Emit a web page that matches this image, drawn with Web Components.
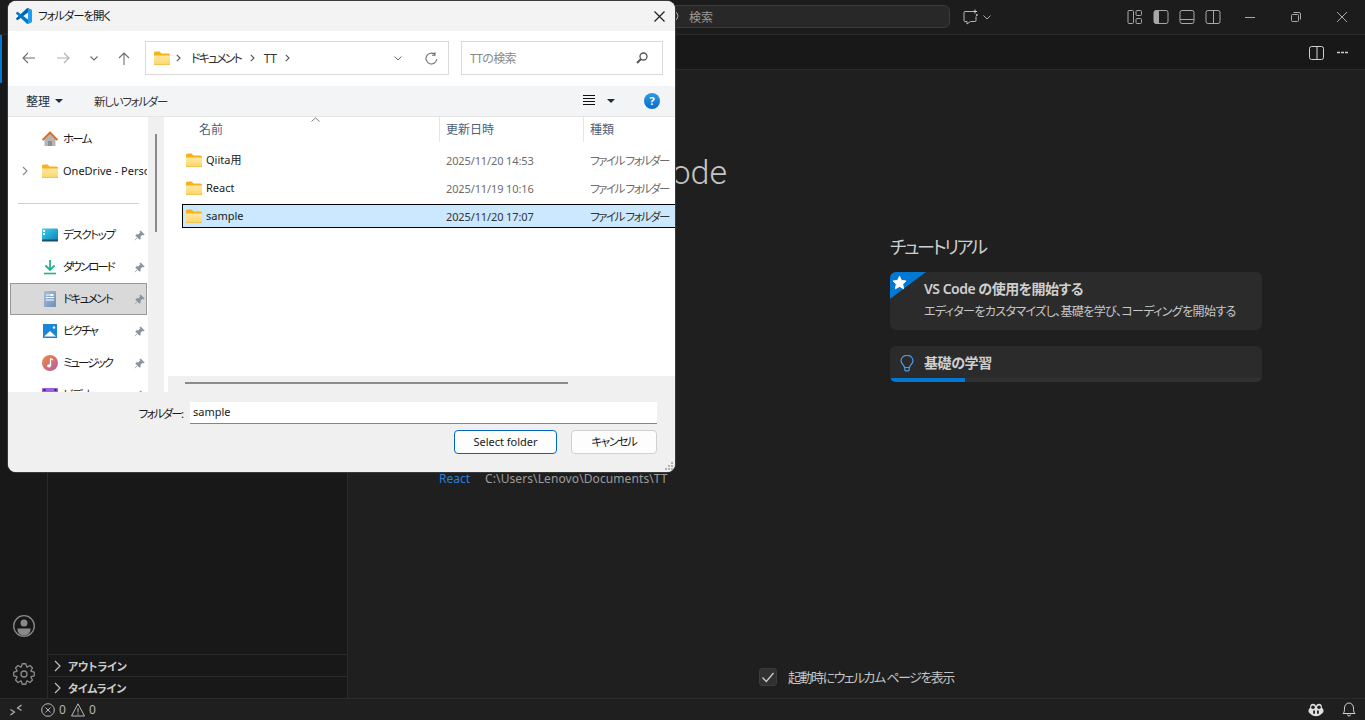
<!DOCTYPE html>
<html lang="ja"><head><meta charset="utf-8"><title>VS Code</title>
<style>
html,body{margin:0;padding:0;width:1365px;height:720px;overflow:hidden;background:#1f1f1f}
body{font-family:"Noto Sans","Noto Sans CJK JP",sans-serif;font-size:12px;font-feature-settings:"palt";color:#ccc}
</style></head><body>
<vs-app></vs-app>
<script>
function def(tag,css,html){customElements.define(tag,class extends HTMLElement{connectedCallback(){if(this.shadowRoot)return;const r=this.attachShadow({mode:'open'});r.innerHTML='<style>'+css+'</style>'+(typeof html==='function'?html(this):html);}});}
const s=(w,h,vb,b,x='')=>`<svg width="${w}" height="${h}" viewBox="${vb}" fill="none" ${x} style="display:block;flex:none">${b}</svg>`;
const st='stroke="#a8a8a8" stroke-width="1"';
function gearPath(){let d='';const n=8,cx=12,cy=12;for(let i=0;i<n;i++){const a=i*2*Math.PI/n;const p=(r,o)=>{const t=a+o;return (cx+r*Math.cos(t)).toFixed(2)+' '+(cy+r*Math.sin(t)).toFixed(2)};d+=(i?'L':'M')+p(7.6,-.36)+'L'+p(10.4,-.17)+'L'+p(10.4,.17)+'L'+p(7.6,.36);}return d+'Z';}
const folder=(w=16,h=14)=>s(w,h,'0 0 16 14',`<defs><linearGradient id="fg" x1="0" y1="0" x2="0" y2="1"><stop offset="0" stop-color="#ffe9a0"/><stop offset="1" stop-color="#fcd56a"/></linearGradient></defs><path d="M0 2a1.500 1.500 0 0 1 1.500-1.500h4L7.500 2.500h7A1.500 1.500 0 0 1 16 4v1H0z" fill="#f5b21b"/><path d="M0 4.500h16v8A1.500 1.500 0 0 1 14.500 14h-13A1.500 1.500 0 0 1 0 12.500z" fill="url(#fg)"/><path d="M0 12.500A1.500 1.500 0 0 0 1.500 14h13a1.500 1.500 0 0 0 1.500-1.500" stroke="#e9a92a" stroke-width=".8"/>`);
const icons={
home:s(16,16,'0 0 16 16',`<path d="M8 2 15.500 9H13.500V15H2.500V9H.5z" fill="#b5b5b5"/><path d="M.6 9 8 1.600 15.400 9" stroke="#dc6a1c" stroke-width="1.800"/><rect x="6" y="10" width="4" height="5" fill="#8e8e8e"/>`),
folder:folder(),
desktop:s(16,16,'0 0 16 16',`<defs><linearGradient id="dk" x1="0" y1="0" x2="1" y2="1"><stop offset="0" stop-color="#3fd0ef"/><stop offset="1" stop-color="#0b83b8"/></linearGradient></defs><rect y="1.500" width="16" height="12" rx="1" fill="url(#dk)"/><rect x="1" y="3" width="2" height="2" fill="#fff"/><rect x="1" y="6" width="2" height="2" fill="#fff"/><rect y="12.500" width="16" height="2" fill="#17506e"/>`),
download:s(16,16,'0 0 16 16',`<path d="M8 1v9M3.500 6.500 8 11l4.500-4.500" stroke="#25b08f" stroke-width="1.800"/><path d="M2 14.500h12" stroke="#25b08f" stroke-width="1.600"/>`),
doc:s(16,16,'0 0 16 16',`<defs><linearGradient id="dc" x1="0" y1="0" x2="1" y2="1"><stop offset="0" stop-color="#a9c0dc"/><stop offset="1" stop-color="#6d8db5"/></linearGradient></defs><rect x="2" width="12" height="16" rx="1" fill="url(#dc)"/><path d="M4 4h6M4 6.500h8M4 9h8" stroke="#fff" stroke-width="1.100"/><rect x="8.500" y="3" width="3" height="2" fill="#fff"/>`),
picture:s(16,16,'0 0 16 16',`<rect width="14" height="14" x="1" y="1" fill="#1a86d9"/><path d="M2 13.500 8 8l6 5.500z" fill="#fff"/><circle cx="12" cy="4.500" r="1.200" fill="#fff"/>`),
music:s(16,16,'0 0 16 16',`<defs><linearGradient id="mu" x1="0" y1="0" x2="1" y2="1"><stop offset="0" stop-color="#f08a3c"/><stop offset="1" stop-color="#b45ca8"/></linearGradient></defs><circle cx="8" cy="8" r="8" fill="url(#mu)"/><path d="M8.500 3.500v7" stroke="#fff" stroke-width="1.300"/><ellipse cx="7" cy="10.800" rx="2" ry="1.600" fill="#fff"/><path d="M8.500 3.500 11 5" stroke="#fff" stroke-width="1.300"/>`),
video:s(16,16,'0 0 16 16',`<rect y="1" width="16" height="14" rx="1" fill="#9a62e0"/><rect x="1.500" y="2" width="2" height="2" fill="#3a2070"/><rect x="12.500" y="2" width="2" height="2" fill="#3a2070"/>`)};
const pin=s(11,11,'0 0 11 11',`<path d="M6.500.8 10.200 4.500 9.200 5 8.200 4.700 6.200 6.700 6.300 8.700 5.300 9.200 1.800 5.700 2.300 4.700 4.300 4.800 6.300 2.800 6 1.800zM3 8 .8 10.200" fill="#8b939b" stroke="#8b939b" stroke-width=".7"/>`);

def('vs-app',`:host{display:grid;width:1365px;height:720px;grid-template:35px 1fr 22px/48px 300px 1fr;position:relative;overflow:hidden}
vs-titlebar{grid-column:1/4}vs-statusbar{grid-column:1/4}`,
`<vs-titlebar></vs-titlebar><vs-activity></vs-activity><vs-sidebar></vs-sidebar><vs-editor></vs-editor><vs-statusbar></vs-statusbar><file-dialog></file-dialog>`);

def('vs-titlebar',`:host{display:flex;align-items:center;background:#1c1c1c;border-bottom:1px solid #2b2b2b;box-sizing:border-box;height:35px}
.search{margin-left:414px;width:536px;height:23px;box-sizing:border-box;margin-top:-1px;border:1px solid #3c3c3c;border-radius:6px;background:#282828;display:flex;align-items:center;justify-content:flex-start;padding-left:253px;gap:7px;color:#9a9a9a;font-size:12px}
.chat{margin-left:13px;display:flex;align-items:center;gap:4px}
.r{margin-left:auto;display:flex;align-items:center}.b{width:26px;display:flex;justify-content:center}.w{width:46px;display:flex;justify-content:center}`,
`<div class="search">${s(14,14,'0 0 14 14',`<circle cx="6" cy="6" r="4" ${st}/><path d="M3 9 1 12" ${st}/>`)}<span>検索</span></div>
<div class="chat">${s(16,16,'0 0 16 16',`<path d="M10 2.500H2A1 1 0 0 0 1 3.500v8a1 1 0 0 0 1 1h2v2.500l3.500-2.500H12a1 1 0 0 0 1-1V7.500" stroke="#b5b5b5"/><path d="M12 .5v4M10 2.500h4" stroke="#d0d0d0"/><circle cx="13.800" cy="6" r="1" fill="#c0c0c0"/>`)}${s(8,5,'0 0 8 5',`<path d="M.5.5 4 4 7.500.5" ${st}/>`)}</div>
<div class="r">
<div class="b">${s(16,16,'0 0 16 16',`<rect x="1" y="1.500" width="5.500" height="13" rx="1" ${st}/><rect x="9" y="1.500" width="5.500" height="5" rx="1" ${st}/><rect x="9" y="9.500" width="5.500" height="5" rx="1" ${st}/>`)}</div>
<div class="b">${s(16,16,'0 0 16 16',`<rect x="1" y="1.500" width="14" height="13" rx="2" ${st}/><path d="M3 1.500h3v13H3a2 2 0 0 1-2-2v-9a2 2 0 0 1 2-2z" fill="#a8a8a8"/>`)}</div>
<div class="b">${s(16,16,'0 0 16 16',`<rect x="1" y="1.500" width="14" height="13" rx="2" ${st}/><path d="M1 10.500h14" ${st}/>`)}</div>
<div class="b">${s(16,16,'0 0 16 16',`<rect x="1" y="1.500" width="14" height="13" rx="2" ${st}/><path d="M8.500 1.500v13" ${st}/>`)}</div>
<div style="width:1px"></div>
<div class="w">${s(10,10,'0 0 10 10',`<path d="M0 5.500h10" ${st}/>`)}</div>
<div class="w">${s(10,10,'0 0 10 10',`<rect x=".5" y="2.500" width="7" height="7" rx="1" ${st}/><path d="M2.500 .5H8A1.500 1.500 0 0 1 9.500 2v5.500" ${st}/>`)}</div>
<div class="w">${s(10,10,'0 0 10 10',`<path d="M0 0 10 10M10 0 0 10" ${st}/>`)}</div>
</div>`);

def('vs-activity',`:host{display:flex;flex-direction:column;align-items:center;justify-content:flex-end;background:#181818;border-right:1px solid #2b2b2b;box-sizing:border-box;padding-bottom:12px;gap:24px;position:relative}
.ind{position:absolute;left:0;top:0;width:2px;height:48px;background:#0078d4}`,
`<div class="ind"></div>
${s(24,24,'0 0 24 24',`<circle cx="12" cy="12" r="10.300" stroke="#8a8a8a" stroke-width="1.300"/><circle cx="12" cy="9" r="3.500" fill="#8a8a8a"/><path d="M5.500 14.500h13v1a6.500 6 0 0 1-13 0z" fill="#8a8a8a"/>`)}
${s(24,24,'0 0 24 24',`<path d="${gearPath()}" stroke="#8a8a8a" stroke-width="1.300" stroke-linejoin="round"/><circle cx="12" cy="12" r="3" stroke="#8a8a8a" stroke-width="1.300"/>`)}`);

def('vs-sidebar',`:host{display:flex;flex-direction:column;justify-content:flex-end;background:#181818;border-right:1px solid #2b2b2b;box-sizing:border-box}
.h{height:22px;box-sizing:border-box;border-top:1px solid #2b2b2b;display:flex;align-items:center;gap:6px;padding-left:6px;font-size:11px;font-weight:700;color:#ccc;letter-spacing:-.2px}`,
[`アウトライン`,`タイムライン`].map(t=>`<div class="h">${s(8,12,'0 0 8 12',`<path d="M1 1l5 5-5 5" stroke="#c0c0c0" stroke-width="1.200"/>`)}<span>${t}</span></div>`).join(''));

def('vs-editor',`:host{display:flex;flex-direction:column;min-width:0}`,`<vs-tabrow></vs-tabrow><vs-welcome></vs-welcome>`);

def('vs-tabrow',`:host{display:flex;align-items:center;justify-content:flex-end;height:35px;box-sizing:border-box;background:#181818;border-bottom:1px solid #2b2b2b;padding-right:17px;gap:13px;padding-top:1px}`,
`${s(16,16,'0 0 16 16',`<rect x="1.500" y="1.500" width="14" height="13" rx="2" stroke="#d0d0d0"/><path d="M9 1.500v13" stroke="#d0d0d0"/>`)}${s(11,3,'0 0 11 3',`<path d="M0 1.500h3M4 1.500h3M8 1.500h3" stroke="#ccc" stroke-width="1.600"/>`)}`);

def('vs-welcome',`:host{flex:1;display:flex;flex-direction:column;background:#1f1f1f;min-height:0}
.g{flex:1;display:grid;grid-template-columns:372px 372px;column-gap:79px;padding-left:91px;padding-top:80px}
h1{margin:0;width:288px;text-align:right;font-size:34px;line-height:44px;font-weight:300;font-family:Roboto,"Noto Sans CJK JP",sans-serif;color:#c4c4c4;white-space:nowrap}
.rec{margin-top:276px;line-height:18px;font-size:12px;display:flex;gap:15px;white-space:nowrap}.rec a{color:#2b7fd4}.rec span{color:#9d9d9d;letter-spacing:.1px}
.rc{padding-top:83px}
h2{margin:0 0 11px;font-size:18px;font-weight:400;line-height:28px;color:#cfcfcf;letter-spacing:-2.250px}
.f{display:flex;justify-content:center;align-items:center;gap:11px;padding-bottom:12px;font-size:13px;color:#c4c4c4;letter-spacing:-1.500px}
.cb{width:18px;height:18px;box-sizing:border-box;border-radius:3px;background:#313131;border:1px solid #3c3c3c;display:flex;align-items:center;justify-content:center}`,
`<div class="g"><div><h1>ode</h1><div class="rec"><a>React</a><span>C:\\Users\\Lenovo\\Documents\\TT</span></div></div>
<div class="rc"><h2>チュートリアル</h2><tut-card featured><span slot="t">VS Code の使用を開始する</span><span slot="d">エディターをカスタマイズし、基礎を学び、コーディングを開始する</span></tut-card><tut-card progress><span slot="t">基礎の学習</span></tut-card></div></div>
<div class="f"><div class="cb">${s(14,14,'0 0 14 14',`<path d="M1.500 7.500 5.300 11.500 12.500 3" stroke="#ccc" stroke-width="1.300"/>`)}</div><span>起動時にウェルカム ページを表示</span></div>`);

def('tut-card',`:host{display:block;position:relative;background:#2b2b2b;border-radius:6px;margin-bottom:16px;overflow:hidden;padding:8px 0 0 34px;box-sizing:border-box;height:58px}
:host([progress]){height:36px}
.t{font-size:14px;font-weight:600;line-height:18px;color:#cfcfcf;letter-spacing:-.4px}
:host([featured]) .t{letter-spacing:-.5px}
.d{font-size:12px;line-height:18px;margin-top:5px;color:#c8c8c8;white-space:nowrap;letter-spacing:-.62px}
.rib{position:absolute;left:0;top:0;width:36px;height:27px;background:#0078d4;clip-path:polygon(0 0,100% 0,0 100%)}
.star{position:absolute;left:2px;top:3px}
.bulb{position:absolute;left:10px;top:9px}
.p{position:absolute;left:0;right:0;bottom:0;height:4px;background:#313131}.p i{display:block;width:75px;height:4px;background:#0078d4}`,
h=>h.hasAttribute('featured')?`<div class="rib"></div><div class="star">${s(15,15,'0 0 16 16',`<path d="M8 1.200 10.100 5.800 15 6.400 11.400 9.700 12.400 14.700 8 12.200 3.600 14.700 4.600 9.700 1 6.400 5.900 5.800z" fill="#fff" stroke="#fff" stroke-linejoin="round"/>`)}</div><div class="t"><slot name="t"></slot></div><div class="d"><slot name="d"></slot></div>`
:`<div class="bulb">${s(14,17,'0 0 14 17',`<path d="M4.500 12.500C4.500 10 1 9 1 5.800A6 5.500 0 0 1 13 5.800C13 9 9.500 10 9.500 12.500zM4.800 12.500v2.300a1 1 0 0 0 1 1h2.400a1 1 0 0 0 1-1v-2.300" stroke="#4a9cf0" stroke-width="1.200"/>`)}</div><div class="t"><slot name="t"></slot></div><div class="p"><i></i></div>`);

def('vs-statusbar',`:host{display:flex;align-items:center;background:#1f1f1f;border-top:1px solid #2b2b2b;box-sizing:border-box;height:22px;color:#b8b8b8;font-size:12px;padding-left:10px}
.g{display:flex;align-items:center}.r{margin-left:auto;display:flex;align-items:center;gap:18px;padding-right:9px}`,
`${s(12,12,'0 0 12 12',`<path d="M.5 11 4.500 8 .5 5.500M11.500 1 7.500 4l4 2.500" stroke="#b8b8b8" stroke-width="1.100"/>`)}
<div class="g" style="margin-left:19px">${s(14,14,'0 0 14 14',`<circle cx="7" cy="7" r="6.300" stroke="#b8b8b8"/><path d="M4.500 4.500l5 5M9.500 4.500l-5 5" stroke="#b8b8b8"/>`)}<span style="margin-left:4px">0</span></div>
<div class="g" style="margin-left:5px">${s(14,14,'0 0 14 14',`<path d="M7 .8 13.500 13H.5z" stroke="#b8b8b8" stroke-linejoin="round"/><path d="M7 5v4.500M7 10.500v1.300" stroke="#b8b8b8"/>`)}<span style="margin-left:4px">0</span></div>
<div class="r">${s(16,14,'0 0 16 14',`<path d="M2 5C2 2 3 .8 5 .8S7.500 2 8 3C8.500 2 9 .8 11 .8S14 2 14 5c1 .8 1.500 1.500 1.500 3 0 1-.5 1.800-1.500 2.500C12.500 12 10.500 13.200 8 13.200S3.500 12 2 10.500C1 9.800.5 9 .5 8 .5 6.500 1 5.800 2 5z" fill="#e0e0e0"/><ellipse cx="5" cy="4.200" rx="1.800" ry="1.800" fill="#1f1f1f"/><ellipse cx="11" cy="4.200" rx="1.800" ry="1.800" fill="#1f1f1f"/><rect x="5.200" y="7.500" width="1.800" height="3.200" fill="#1f1f1f"/><rect x="9" y="7.500" width="1.800" height="3.200" fill="#1f1f1f"/>`)}${s(14,15,'0 0 14 15',`<path d="M1 11.500C2.500 10 2.500 8.500 2.500 6A4.500 5 0 0 1 11.500 6C11.500 8.500 11.500 10 13 11.500zM5.500 12.500a1.500 1.500 0 0 0 3 0" stroke="#d0d0d0"/>`)}</div>`);

/* dialog */
def('file-dialog',`:host{position:absolute;left:8px;top:1px;width:667px;height:471px;border-radius:8px;overflow:hidden;background:#f0f0f0;display:flex;flex-direction:column;color:#1a1a1a;box-shadow:0 0 0 1px #3a3a3a}
.body{flex:1;display:flex;min-height:0;background:#fff;overflow:hidden}
.strip{width:16px;background:#f0f0f0;display:flex;justify-content:center;flex:none;padding-top:17px;box-sizing:border-box;margin-right:2px}
.strip i{display:block;width:2px;height:98px;background:#8a8a8a}`,
`<fd-title></fd-title><fd-nav></fd-nav><fd-cmd></fd-cmd><div class="body"><fd-tree></fd-tree><div class="strip"><i></i></div><fd-list></fd-list></div><fd-foot></fd-foot>`);

def('fd-title',`:host{display:flex;align-items:center;height:30px;background:#f3f3f3;padding-left:8px;flex:none;font-size:11.500px;letter-spacing:-1.150px;color:#1a1a1a}
span{margin-left:6px;margin-top:-2px}svg:last-child{margin-left:auto;margin-right:10px}`,
s(16,16,'0 0 100 100',`<path d="M96.460 10.800 75.860.87c-2.390-1.150-5.240-.67-7.110 1.200L1.300 63.570c-1.810 1.660-1.810 4.520.01 6.180l5.510 5.010c1.490 1.350 3.720 1.450 5.320.24L93.460 13.370c2.720-2.070 6.630-.12 6.630 3.300v-.24c0-2.400-1.380-4.590-3.540-5.630z" fill="#0065A9"/><path d="M96.460 89.200 75.860 99.130c-2.390 1.150-5.240.67-7.110-1.200L1.300 36.430c-1.810-1.660-1.810-4.520.01-6.180l5.510-5.010c1.490-1.350 3.720-1.450 5.320-.24L93.460 86.630c2.720 2.070 6.630.12 6.630-3.300v.24c0 2.400-1.380 4.590-3.540 5.630z" fill="#007ACC"/><path d="M75.860 99.130c-2.390 1.150-5.240.67-7.110-1.200 2.310 2.310 6.250.67 6.250-2.590V4.670c0-3.260-3.940-4.890-6.250-2.590 1.870-1.870 4.720-2.350 7.110-1.200L96.460 10.800c2.160 1.040 3.540 3.230 3.540 5.630v67.140c0 2.400-1.380 4.590-3.540 5.630z" fill="#1F9CF0"/>`)+
`<span>フォルダーを開く</span>`+s(11,11,'0 0 11 11',`<path d="M.5.5l10 10M10.500.5l-10 10" stroke="#1a1a1a" stroke-width="1.100"/>`));

def('fd-nav',`:host{display:flex;align-items:center;height:55px;box-sizing:border-box;padding-bottom:1px;background:#fff;flex:none;position:relative;font-size:12px}
.box{height:34px;box-sizing:border-box;border:1.500px solid #d9d9d9;display:flex;align-items:center}
.addr{margin-left:15px;width:304px;padding-left:8px}.find{margin-left:12px;width:202px;padding:0 14px 0 8px;justify-content:space-between;color:#8a8a8a;letter-spacing:-.65px}`,
`<div style="margin-left:14px;display:flex;align-items:center">
${s(13,12,'0 0 13 12',`<path d="M13 6H1M6 1 1 6l5 5" stroke="#6d6d6d" stroke-width="1.100"/>`)}
<span style="width:22px"></span>
${s(13,12,'0 0 13 12',`<path d="M0 6h12M7 1l5 5-5 5" stroke="#b0b0b0" stroke-width="1.100"/>`)}
<span style="width:20px"></span>
${s(8,5,'0 0 8 5',`<path d="M.5.5 4 4 7.500.5" stroke="#6d6d6d" stroke-width="1.100"/>`)}
<span style="width:20px"></span>
${s(12,13,'0 0 12 13',`<path d="M6 13V1M1 6l5-5 5 5" stroke="#6d6d6d" stroke-width="1.100"/>`)}
</div>
<div class="box addr">${folder()}<span style="width:6px"></span>${s(5,8,'0 0 5 8',`<path d="M.8.8 4 4 .8 7.200" stroke="#555" stroke-width="1.100"/>`)}<span style="width:10px"></span><span style="color:#333;letter-spacing:-1.900px;margin-right:1.900px">ドキュメント</span><span style="width:7px"></span>${s(5,8,'0 0 5 8',`<path d="M.8.8 4 4 .8 7.200" stroke="#555" stroke-width="1.100"/>`)}<span style="width:9px"></span><span style="color:#333;letter-spacing:-.5px">TT</span><span style="width:9px"></span>${s(5,8,'0 0 5 8',`<path d="M.8.8 4 4 .8 7.200" stroke="#555" stroke-width="1.100"/>`)}
<span style="margin-left:auto;margin-right:23px">${s(8,5,'0 0 8 5',`<path d="M.5.5 4 4 7.500.5" stroke="#6d6d6d"/>`)}</span><span style="margin-right:10px">${s(13,13,'0 0 13 13',`<path d="M11.800 7A5.400 5.400 0 1 1 9.800 2.300M10 .3v3H7" stroke="#6d6d6d" stroke-width="1.100"/>`)}</span></div>
<div class="box find"><span>TTの検索</span>${s(12,12,'0 0 12 12',`<circle cx="7.500" cy="4.500" r="3.500" stroke="#555" stroke-width="1.300"/><path d="M5 7 1 11" stroke="#555" stroke-width="2"/>`)}</div>`);

def('fd-cmd',`:host{display:flex;align-items:center;height:31px;box-sizing:border-box;background:#f3f4f6;border-bottom:1px solid #e5e5e5;flex:none;padding-left:18px;font-size:12px;color:#1f2d3d;padding-bottom:1px}
.tri{display:inline-block;width:0;height:0;border:4px solid transparent;border-top:4px solid #1f2d3d;border-bottom:0}
.r{margin-left:auto;display:flex;align-items:center;padding-right:15px}
.help{width:16px;height:16px;border-radius:50%;background:linear-gradient(#2b9ce8,#0a6cc4);color:#fff;font-weight:700;font-size:11px;display:flex;align-items:center;justify-content:center;margin-left:29px;line-height:1}`,
`<span>整理</span><i class="tri" style="margin:0 0 0 5px"></i><span style="margin-left:31px;color:#333;font-size:11.500px;letter-spacing:-1.280px">新しいフォルダー</span>
<div class="r">${s(12,11,'0 0 12 11',`<path d="M0 .5h12M0 3.500h12M0 6.500h12M0 9.500h12" stroke="#111" stroke-width="1"/>`)}<i class="tri" style="margin-left:12px"></i><div class="help">?</div></div>`);

def('fd-tree',`:host{display:flex;flex-direction:column;width:140px;flex:none;background:#fff;padding-top:6px;box-sizing:border-box;height:276px;overflow:hidden}
.sep{height:32px;flex:none;display:flex;align-items:center;padding-left:10px}.sep i{display:block;width:121px;height:1px;background:#d0d0d0}`,
`<tree-row icon="home" ls="-1.800">ホーム</tree-row><tree-row icon="folder" chev ls="0" fs="11">OneDrive - Personal</tree-row><div class="sep"><i></i></div>
<tree-row icon="desktop" pin ls="-1.400">デスクトップ</tree-row><tree-row icon="download" pin ls="-2">ダウンロード</tree-row><tree-row icon="doc" pin sel ls="-1.600">ドキュメント</tree-row><tree-row icon="picture" pin ls="-1.600">ピクチャ</tree-row><tree-row icon="music" pin ls="-2">ミュージック</tree-row><tree-row icon="video" pin ls="-1.400">ビデオ</tree-row>`);

def('tree-row',`:host{display:flex;align-items:center;height:32px;flex:none;position:relative;box-sizing:border-box;padding-left:34px;font-size:11.500px;color:#1a1a1a;white-space:nowrap}
.bg{position:absolute;left:2px;right:1px;top:0;bottom:0;background:#d9d9d9;border:1px solid #999;box-sizing:border-box}
.i{position:relative;width:16px;flex:none;margin-right:5px}.t{position:relative;overflow:hidden;width:84px;flex:none;margin-top:-2px}
.p{position:absolute;left:126px;top:11px}.c{position:absolute;left:14px;top:11px}`,
h=>`${h.hasAttribute('sel')?'<div class="bg"></div>':''}${h.hasAttribute('chev')?`<div class="c">${s(6,10,'0 0 6 10',`<path d="M1 1l4 4-4 4" stroke="#8a8a8a" stroke-width="1.100"/>`)}</div>`:''}<div class="i">${icons[h.getAttribute('icon')]}</div><div class="t" style="letter-spacing:${h.getAttribute('ls')||0}px;${h.getAttribute('fs')?'font-size:'+h.getAttribute('fs')+'px':''}"><slot></slot></div>${h.hasAttribute('pin')?`<div class="p">${pin}</div>`:''}`);

def('fd-list',`:host{flex:1;display:flex;flex-direction:column;min-width:0;position:relative;overflow:hidden}
.h{display:flex;height:26px;flex:none;color:#4c607a;font-size:12px;align-items:center;position:relative}
.h span{position:absolute;top:5px;line-height:16px}.h b{position:absolute;top:0;bottom:1px;width:1px;background:#e5e5e5}
.car{position:absolute;left:145px;top:0}
.rows{flex:1;padding:5px 0 0 16px;display:flex;flex-direction:column;gap:4px;min-height:0}
.hs{height:16px;flex:none;background:#f0f0f0;display:flex;align-items:center;padding-left:17px;margin-left:2px}.hs i{display:block;width:383px;height:2px;background:#8a8a8a;margin-top:-2px}`,
`<div class="h"><div class="car">${s(9,5,'0 0 9 5',`<path d="M.5 4.500 4.500.8l4 3.700" stroke="#777"/>`)}</div><span style="left:33px">名前</span><b style="left:273px"></b><span style="left:280px">更新日時</span><b style="left:417px"></b><span style="left:424px">種類</span></div>
<div class="rows"><file-row name="Qiita用" date="2025/11/20 14:53"></file-row><file-row name="React" date="2025/11/19 10:16"></file-row><file-row sel name="sample" date="2025/11/20 17:07"></file-row></div>
<div class="hs"><i></i></div>`);

def('file-row',`:host{display:grid;grid-template-columns:264px 144px 90px;height:24px;box-sizing:border-box;align-items:center;border:1px solid transparent;width:500px;color:#6d6d6d;white-space:nowrap;flex:none}
:host([sel]){background:#cce8ff;border-color:#000;color:#333;border-right:0}
.n{display:flex;align-items:center;gap:4px;padding-left:3px;color:#1a1a1a;font-size:11px}.n span{margin-top:-2px}.k{letter-spacing:-1.500px;font-size:11.500px;overflow:hidden}.d{margin-left:-1px;font-size:11px;letter-spacing:-.12px}`,
h=>`<div class="n">${folder()}<span>${h.getAttribute('name')}</span></div><div class="d">${h.getAttribute('date')}</div><div class="k" style="margin-left:-1px">ファイル フォルダー</div>`);

def('fd-foot',`:host{display:block;height:80px;flex:none;background:#f0f0f0;position:relative;box-sizing:border-box;padding:10px 18px 0 0;font-size:12px}
.r{display:flex;align-items:center;justify-content:flex-end;gap:6px}
.in{width:467px;height:22px;box-sizing:border-box;background:#fff;border-bottom:1px solid #858585;padding-left:3px;line-height:20px;color:#1a1a1a;font-size:11px}
.lb{letter-spacing:-1.800px;font-size:11.500px;color:#1a1a1a;margin-right:1.800px}
.bt{display:flex;justify-content:flex-end;gap:14px;margin-top:6px}
button{font:inherit;font-feature-settings:inherit;font-size:11px;height:24px;box-sizing:border-box;border-radius:4px;background:#fdfdfd;color:#1a1a1a;padding:0 0 2px;border:1px solid #d0d0d0}
.p{width:103px;border:1.500px solid #0067c0}.c{width:86px;font-size:11.500px;letter-spacing:-1.400px}
.grip{position:absolute;right:1px;bottom:1px}`,
`<div class="r"><span class="lb">フォルダー:</span><div class="in">sample</div></div>
<div class="bt"><button class="p">Select folder</button><button class="c">キャンセル</button></div>
<div class="grip">${s(10,9,'0 0 10 9',`<g fill="#b0b0b0"><rect x="7" y="0" width="2" height="2"/><rect x="4" y="3" width="2" height="2"/><rect x="7" y="3" width="2" height="2"/><rect x="1" y="6" width="2" height="2"/><rect x="4" y="6" width="2" height="2"/><rect x="7" y="6" width="2" height="2"/></g>`)}</div>`);
</script>
</body></html>
